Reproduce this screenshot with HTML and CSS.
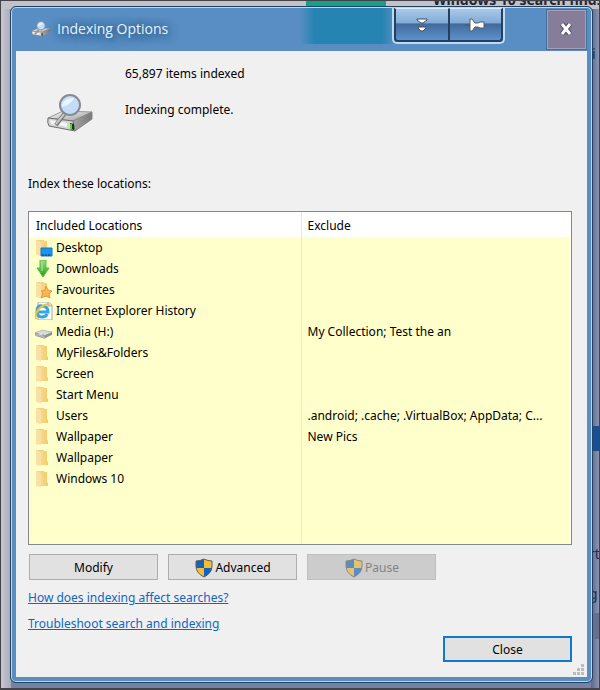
FILE: index.html
```html
<!DOCTYPE html>
<html lang="en">

<head>
  <meta charset="UTF-8">
  <meta name="viewport" content="width=device-width, initial-scale=1.0">
  <title>Indexing Options</title>
  <link rel="stylesheet" href="styles.css">
</head>

<body>
  <!-- shared icons -->
  <svg class="defs" width="0" height="0" aria-hidden="true">
    <defs>
      <linearGradient id="metal" x1="0" y1="0" x2="1" y2="1">
        <stop offset="0" stop-color="#fafafa" />
        <stop offset="1" stop-color="#9a9a9a" />
      </linearGradient>
      <linearGradient id="side" x1="0" y1="0" x2="1" y2="0">
        <stop offset="0" stop-color="#a5a5a5" />
        <stop offset="1" stop-color="#777" />
      </linearGradient>
      <linearGradient id="gold" x1="0" y1="0" x2="1" y2="0">
        <stop offset="0" stop-color="#f5d98f" />
        <stop offset="1" stop-color="#f4cc68" />
      </linearGradient>
      <linearGradient id="green" x1="0" y1="0" x2="0" y2="1">
        <stop offset="0" stop-color="#9be07e" />
        <stop offset="1" stop-color="#1f9c14" />
      </linearGradient>
    </defs>
    <symbol id="drive-search" viewBox="0 0 48 40">
      <path d="M2 25l15-7 29 1-19 9z" fill="url(#metal)" stroke="#999" />
      <path d="M27 28l19-9v7L29 38z" fill="url(#side)" stroke="#888" />
      <path d="M2 25l25 3 2 10-26-5q-2-3-1-8z" fill="#d4d4d4" stroke="#6d6d6d" />
      <path d="M4 27l17 3v4L5 31z" fill="#f3f3f3" />
      <path d="M24 30l4 1v6l-4-1z" fill="#173a10" />
      <path d="M25 31v5" stroke="#5ad72d" stroke-width="2" />
      <path d="M19 20l-9 12" stroke="#757575" stroke-width="4" />
      <path d="M19 20l-9 11" stroke="#c7c7c7" stroke-width="2" />
      <circle cx="24" cy="12" r="10" fill="#c3dcf8" stroke="#858b95" stroke-width="2" />
      <path d="M16 11q4-7 12-6-2 6-12 9z" fill="#e9f4ff" />
    </symbol>
    <symbol id="folder" viewBox="0 0 18 18">
      <path d="M1 1h8v15H1z" fill="#f3d288" />
      <path d="M1 1l5 2v14l-5-1z" fill="#f9e0a4" />
      <path d="M6 2h6v10l1 1v3H6z" fill="url(#gold)" />
    </symbol>
    <symbol id="desktop" viewBox="0 0 18 18">
      <use href="#folder" />
      <path d="M6 9h11v8H6z" fill="#1597f5" stroke="#1a70bb" />
      <path d="M7 16h9" stroke="#0b355c" stroke-dasharray="2 1" />
    </symbol>
    <symbol id="download" viewBox="0 0 18 18">
      <path d="M5 0h6v8h3l-6 9-6-9h3z" fill="url(#green)" stroke="#5cbb48" />
      <path d="M7 2v9" stroke="#b9efa4" />
    </symbol>
    <symbol id="star" viewBox="0 0 18 18">
      <use href="#folder" />
      <path d="M11 5l2 4 4 1-3 3 1 4-4-2-5 2 2-5-2-2 4-1z" fill="#f7b651" stroke="#e79b3a" />
    </symbol>
    <symbol id="explorer" viewBox="0 0 18 18">
      <path d="M3 0h10l4 3v15H3z" fill="#fcfdfe" stroke="#a8a8a8" />
      <path d="M13 0v4h4" fill="#e6e6e6" stroke="#a8a8a8" />
      <path d="M12 12q-1 3-5 3-5 0-5-6t5-5q6 0 6 6H4" fill="none" stroke="#32a6e6" stroke-width="3" />
      <path d="M1 17Q-1 11 6 5q6-4 8-2" fill="none" stroke="#f2c331" stroke-width="2" />
    </symbol>
    <symbol id="drive" viewBox="0 0 20 18">
      <path d="M0 10l8-3 11 2-8 4z" fill="#dadada" stroke="#b5b5b5" />
      <path d="M0 10l11 3v3L1 13z" fill="#b8b8b8" stroke="#999" />
      <path d="M11 13l8-4v3l-8 4z" fill="#909090" />
      <path d="M4 11l4 1" stroke="#f8f8f8" />
    </symbol>
    <symbol id="shield" viewBox="0 0 20 20">
      <path d="M10 1q4 2 8 2v5q0 7-8 11Q2 15 2 8V3q4 0 8-2z" fill="#f8bd2f" />
      <path d="M10 1v9H2V3q4 0 8-2zM10 10h8q-1 6-8 9z" fill="#1263c6" />
      <path d="M10 1q4 2 8 2v5q0 7-8 11Q2 15 2 8V3q4 0 8-2z" fill="none" stroke="#5e5e55" stroke-width="1" />
    </symbol>
  </svg>

  <!-- web page showing around the dialog -->
  <div class="backdrop" aria-hidden="true">
    <span class="tile"></span>
    <b class="headline">Windows 10 search finds</b>
    <span class="band"></span>
    <span class="block"></span>
    <span class="letter letter-i">i</span>
    <i class="letter letter-r">rt</i>
    <b class="letter letter-g">g</b>
  </div>

  <main class="window">
    <header class="titlebar">
      <svg class="title-icon"><use href="#drive-search" /></svg>
      <h1>Indexing Options</h1>
      <div class="tools">
        <button type="button" aria-label="Roll up">
          <svg width="12" height="16" viewBox="0 0 12 16" fill="#fff" stroke="#444c58">
            <path d="M1 2h10v1L7 6H5L1 3z" />
            <path d="M2 10h8v1l-3 3H5l-3-3z" />
          </svg>
        </button>
        <button type="button" aria-label="Pin">
          <svg width="22" height="16" viewBox="0 0 22 16" fill="#fff" stroke="#555d68">
            <path d="M1 8h5" stroke-width="2" />
            <path d="M6 2h2l3 4h3l2-1h4v6h-4l-2-1h-3l-3 4H6z" />
          </svg>
        </button>
      </div>
      <button type="button" class="close-x" aria-label="Close window">
        <svg width="16" height="16" viewBox="0 0 16 16" fill="none">
          <path d="M4 3l8 10M12 3L4 13" stroke="#48465a" stroke-width="5" />
          <path d="M4 3l8 10M12 3L4 13" stroke="#fff" stroke-width="3" />
        </svg>
      </button>
    </header>

    <section class="content">
      <div class="status">
        <svg class="status-icon"><use href="#drive-search" /></svg>
        <div>
          <p>65,897 items indexed</p>
          <p>Indexing complete.</p>
        </div>
      </div>

      <p class="label" id="locations">Index these locations:</p>
      <div class="list">
        <table aria-labelledby="locations">
          <thead>
            <tr><th>Included Locations</th><th>Exclude</th></tr>
          </thead>
          <tbody>
            <tr><td><svg><use href="#desktop" /></svg>Desktop</td><td></td></tr>
            <tr><td><svg><use href="#download" /></svg>Downloads</td><td></td></tr>
            <tr><td><svg><use href="#star" /></svg>Favourites</td><td></td></tr>
            <tr><td><svg><use href="#explorer" /></svg>Internet Explorer History</td><td></td></tr>
            <tr><td><svg><use href="#drive" /></svg>Media (H:)</td><td>My Collection; Test the an</td></tr>
            <tr><td><svg><use href="#folder" /></svg>MyFiles&amp;Folders</td><td></td></tr>
            <tr><td><svg><use href="#folder" /></svg>Screen</td><td></td></tr>
            <tr><td><svg><use href="#folder" /></svg>Start Menu</td><td></td></tr>
            <tr><td><svg><use href="#folder" /></svg>Users</td><td>.android; .cache; .VirtualBox; AppData; C...</td></tr>
            <tr><td><svg><use href="#folder" /></svg>Wallpaper</td><td>New Pics</td></tr>
            <tr><td><svg><use href="#folder" /></svg>Wallpaper</td><td></td></tr>
            <tr><td><svg><use href="#folder" /></svg>Windows 10</td><td></td></tr>
            <tr class="filler"><td></td><td></td></tr>
          </tbody>
        </table>
      </div>

      <div class="actions">
        <button type="button" class="btn">Modify</button>
        <button type="button" class="btn"><svg><use href="#shield" /></svg>Advanced</button>
        <button type="button" class="btn" disabled><svg><use href="#shield" /></svg>Pause</button>
      </div>
      <div class="links">
        <a href="#">How does indexing affect searches?</a>
        <a href="#">Troubleshoot search and indexing</a>
      </div>
      <div class="footer">
        <button type="button" class="btn default">Close</button>
      </div>
      <svg class="grip" width="12" height="12" fill="#bcbcbc" aria-hidden="true">
        <path d="M8 0h3v3H8zM4 4h3v3H4zM8 4h3v3H8zM0 8h3v3H0zM4 8h3v3H4zM8 8h3v3H8z" />
      </svg>
    </section>
  </main>
</body>

</html>
```
FILE: styles.css
```css
* {
  box-sizing: border-box;
}

body {
  margin: 0;
  min-height: 100vh;
  display: flex;
  padding: 6px 7px 7px 10px;
  font-family: Tahoma, "Noto Sans", sans-serif;
  font-size: 12px;
  line-height: 16px;
  color: #000;
}

h1,
p {
  margin: 0;
  font-weight: normal;
}

button {
  font: inherit;
  color: inherit;
}

.defs {
  position: absolute;
}

/* page behind the dialog */
.backdrop {
  position: absolute;
  inset: 0;
  overflow: hidden;
  border: 1px solid #444349;
  border-bottom: 2px solid #444349;
  background:
    linear-gradient(#c2c2cb, #c2c2cb) top / 100% 8px no-repeat,
    linear-gradient(to right, #c8c8d3, #a9a9b8) left / 10px 100% no-repeat,
    linear-gradient(to right, #59698b, #8d95b2) right / 8px 100% no-repeat,
    #7382a5;
}

.backdrop > * {
  position: absolute;
}

.tile {
  left: 305px;
  top: 0;
  width: 80px;
  height: 6px;
  background: #16a08c;
}

.headline {
  left: 432px;
  top: -9px;
  font: bold 14px/16px "Noto Sans", sans-serif;
  color: #25252f;
  white-space: nowrap;
}

.band,
.block {
  right: 0;
  width: 6px;
}

.band {
  top: 425px;
  height: 25px;
  background: #164f98;
}

.block {
  top: 612px;
  height: 26px;
  background: #66708c;
}

.letter {
  left: 591px;
  font: 14px/16px "Noto Sans", sans-serif;
  color: #1e2b4c;
}

.letter-i {
  top: 45px;
}

.letter-r {
  left: 588px;
  top: 545px;
}

.letter-g {
  left: 588px;
  top: 585px;
}

/* dialog frame */
.window {
  position: relative;
  flex: 1;
  display: flex;
  flex-direction: column;
  padding: 1px 5px 5px;
  border: 1px solid #24425f;
  border-radius: 6px;
  box-shadow: inset 0 0 0 1px #b4dcf4;
  background: #588ec3;
}

.titlebar {
  display: flex;
  align-items: flex-start;
  height: 43px;
  background: linear-gradient(to right, transparent, #2584b2 15%, #2584b2 85%, transparent) 284px 0 / 96px 36px no-repeat;
}

.title-icon {
  width: 20px;
  height: 18px;
  margin: 12px 6px 0 15px;
}

.titlebar h1 {
  flex: 1;
  font: 14px/20px "Open Sans", sans-serif;
  margin-top: 11px;
  color: #e8f4ff;
  text-shadow: 0 0 8px #24557f, 2px 2px 10px #24557f;
}

.tools {
  display: flex;
  width: 113px;
  height: 36px;
  margin-right: 41px;
  border: 2px solid #b9dcf2;
  border-top: 0;
  border-radius: 0 0 5px 5px;
}

.tools button {
  flex: 1;
  display: flex;
  align-items: center;
  justify-content: center;
  padding: 0;
  border: 2px solid #25405f;
  border-top: 1px solid #d9eaf8;
  background: linear-gradient(#a9c9e8, #80abd7 45%, #42699a 48%, #5d92cc);
}

.tools button:first-child {
  border-right-width: 1px;
  border-bottom-left-radius: 4px;
}

.tools button:last-child {
  border-left-width: 1px;
  border-bottom-right-radius: 4px;
}

.close-x {
  display: flex;
  align-items: center;
  justify-content: center;
  width: 41px;
  height: 41px;
  margin-top: 1px;
  padding: 0 2px 2px 0;
  border: 1px solid #426f9b;
  box-shadow: inset 0 0 0 1px #a99fb5;
  background: #857d99;
}

.content {
  position: relative;
  flex: 1;
  display: flex;
  flex-direction: column;
  padding: 15px 15px 15px 12px;
  background: #f0f0f0;
}

.status {
  display: flex;
  height: 110px;
}

.status-icon {
  width: 48px;
  height: 40px;
  margin: 27px 31px 0 18px;
}

.status p {
  margin-bottom: 20px;
}

.label {
  margin-bottom: 19px;
}

/* locations */
.list {
  flex: 1;
  display: flex;
  min-height: 334px;
  padding-right: 2px;
  border: 1px solid #828790;
  background: #fffff0;
}

.list table {
  width: 100%;
  table-layout: fixed;
  border-collapse: collapse;
  background: #ffffcc;
}

.list th {
  height: 25px;
  padding: 2px 7px 0;
  font-weight: normal;
  text-align: left;
  background: #fff;
}

.list td {
  height: 21px;
  padding: 0 6px;
  white-space: nowrap;
  line-height: 20px;
}

.list th:first-child,
.list td:first-child {
  width: 272px;
  border-right: 1px solid #e8e8d4;
}

.list th:last-child {
  padding-left: 6px;
}

.list .filler td {
  height: auto;
}

.list svg {
  width: 18px;
  height: 18px;
  margin-right: 3px;
  vertical-align: middle;
}

/* buttons and links */
.actions {
  display: flex;
  gap: 10px;
  margin: 9px 0 10px;
  padding-left: 1px;
}

.btn {
  display: flex;
  align-items: center;
  justify-content: center;
  width: 129px;
  height: 26px;
  padding: 1px 0 0;
  border: 1px solid #adadad;
  background: #e1e1e1;
}

.btn svg {
  width: 20px;
  height: 20px;
  margin-right: 1px;
}

.btn:disabled {
  border-color: #bfbfbf;
  background: #ccc;
  color: #838383;
}

.btn:disabled svg {
  opacity: 0.6;
}

.links {
  display: flex;
  flex-direction: column;
  align-items: flex-start;
  gap: 10px;
}

.links a {
  color: #0f66c4;
}

.footer {
  display: flex;
  justify-content: flex-end;
  margin-top: 4px;
}

.btn.default {
  border: 2px solid #0f78d0;
}

.grip {
  position: absolute;
  right: 2px;
  bottom: 1px;
}
```
